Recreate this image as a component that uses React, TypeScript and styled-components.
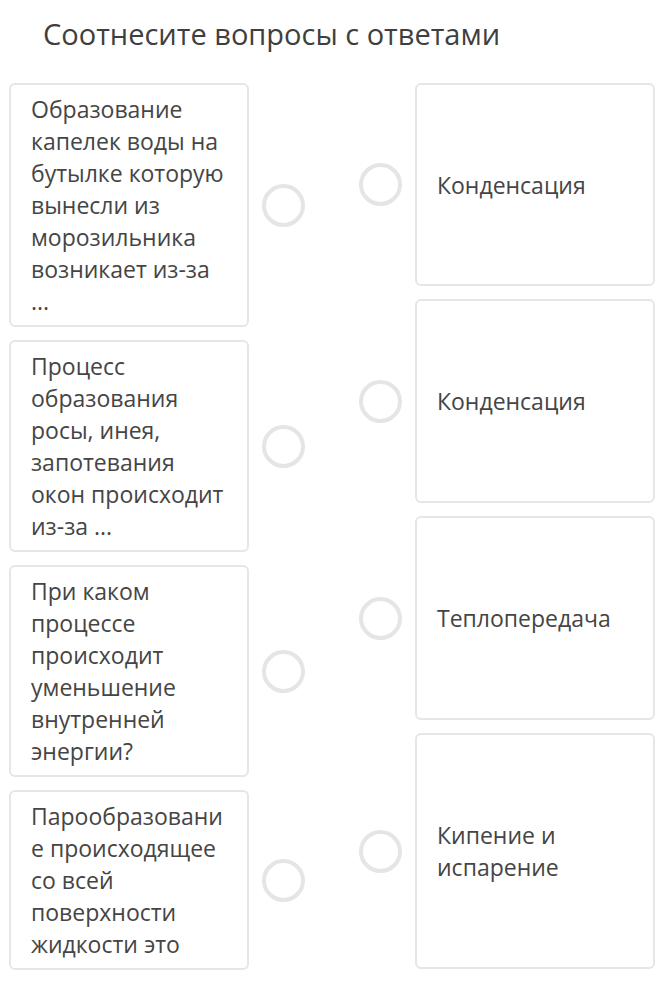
import React from "react";
import styled, { createGlobalStyle } from "styled-components";

const GlobalStyle = createGlobalStyle`
  html, body {
    margin: 0;
    padding: 0;
    background: #ffffff;
  }
  body {
    font-family: "Open Sans", "Noto Sans", sans-serif;
    color: #444444;
  }
`;

const Page = styled.div`
  width: 657px;
  padding: 15px 2px 12px 9px;
  box-sizing: border-box;
`;

const Title = styled.h1`
  margin: 0 0 30px 34px;
  font-size: 29px;
  font-weight: 400;
  line-height: 38px;
  color: #3f3f3f;
`;

const Board = styled.div`
  display: flex;
  align-items: flex-start;
  gap: 54px;
`;

const Column = styled.div<{ $gap: number }>`
  display: flex;
  flex-direction: column;
  gap: ${(p) => p.$gap}px;
`;

const Row = styled.div`
  display: flex;
  align-items: center;
  gap: 13px;
`;

const Card = styled.div<{ $height?: number }>`
  width: 240px;
  box-sizing: border-box;
  border: 2px solid #e6e6e6;
  border-radius: 6px;
  background: #ffffff;
  padding: 8px 18px 8px 20px;
  font-size: 23px;
  line-height: 32px;
  color: #454545;
  overflow-wrap: anywhere;
  ${(p) => (p.$height ? `height: ${p.$height}px;` : "")}
`;

const AnswerCard = styled(Card)`
  display: flex;
  align-items: center;
`;

const Dot = styled.div`
  width: 43px;
  height: 43px;
  box-sizing: border-box;
  border-radius: 50%;
  border: 4px solid #e3e5e7;
  flex: none;
`;

const questions = [
  "Образование капелек воды на бутылке которую вынесли из морозильника возникает из-за ...",
  "Процесс образования росы, инея, запотевания окон происходит из-за ...",
  "При каком процессе происходит уменьшение внутренней энергии?",
  "Парообразование происходящее со всей поверхности жидкости это",
];

const answers = [
  { text: "Конденсация", height: 203 },
  { text: "Конденсация", height: 204 },
  { text: "Теплопередача", height: 204 },
  { text: "Кипение и испарение", height: 236 },
];

export default function App() {
  return (
    <>
      <GlobalStyle />
      <Page>
        <Title>Соотнесите вопросы с ответами</Title>
        <Board>
          <Column $gap={13}>
            {questions.map((q, i) => (
              <Row key={i}>
                <Card>{q}</Card>
                <Dot />
              </Row>
            ))}
          </Column>
          <Column $gap={13}>
            {answers.map((a, i) => (
              <Row key={i}>
                <Dot />
                <AnswerCard $height={a.height}>
                  <span>{a.text}</span>
                </AnswerCard>
              </Row>
            ))}
          </Column>
        </Board>
      </Page>
    </>
  );
}
